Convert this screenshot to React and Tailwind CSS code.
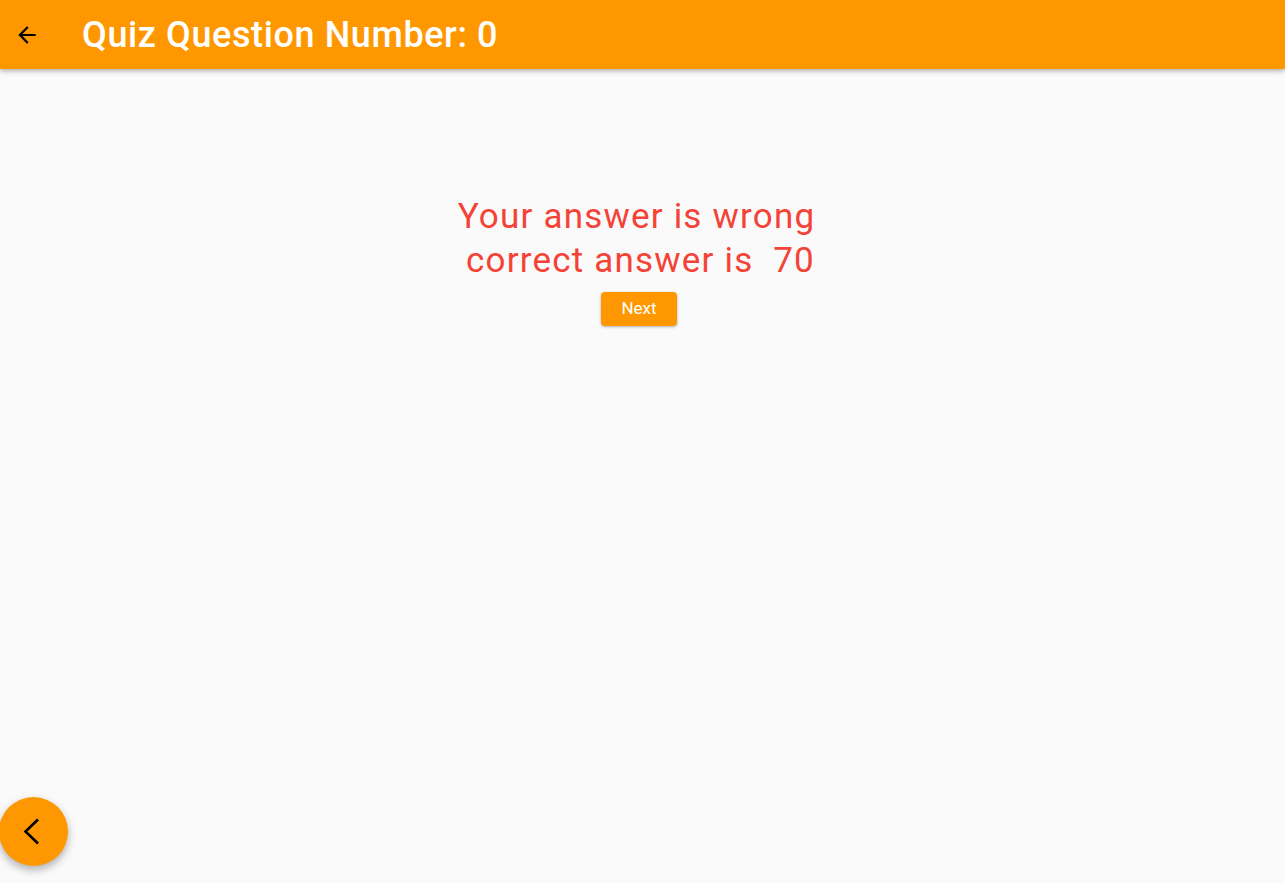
export default function App() {
  return (
    <div className="relative h-[883px] w-full overflow-hidden bg-[#fafafa]" style={{ fontFamily: "Roboto, 'Noto Sans', sans-serif" }}>
      <header className="flex h-[69px] items-center bg-[#ff9800] shadow-[0_2px_5px_rgba(0,0,0,0.3)]">
        <button className="ml-[14px] flex h-[24px] w-[26px] items-center justify-center text-black">
          <svg width="26" height="26" viewBox="0 0 24 24" fill="currentColor">
            <path d="M20 11H7.83l5.59-5.59L12 4l-8 8 8 8 1.41-1.41L7.83 13H20v-2z" />
          </svg>
        </button>
        <h1 className="ml-[42px] text-[36px] font-medium leading-none tracking-[0.6px] text-white">Quiz Question Number: 0</h1>
      </header>

      <main className="flex flex-col items-center pt-[126px]">
        <p className="pr-[12px] text-center text-[35px] leading-[44px] tracking-[1.2px] text-[#f44336]">
          Your answer is wrong
          <br />
          <span className="pl-[8px]">correct answer is&nbsp; 70</span>
        </p>
        <button className="mr-[7px] mt-[9px] h-[34px] w-[76px] rounded-[4px] bg-[#ff9800] text-[17px] font-normal text-white shadow-[0_1px_3px_rgba(0,0,0,0.3)]">
          Next
        </button>
      </main>

      <button className="absolute bottom-[17px] left-[-1px] flex h-[69px] w-[69px] items-center justify-center rounded-full bg-[#ff9800] text-black shadow-[0_4px_8px_rgba(0,0,0,0.3)]">
        <svg width="36" height="36" viewBox="0 0 36 36" fill="none" stroke="currentColor" strokeWidth="2.6">
          <polyline points="22,5.5 9.5,17.5 22,29.5" />
        </svg>
      </button>
    </div>
  );
}
